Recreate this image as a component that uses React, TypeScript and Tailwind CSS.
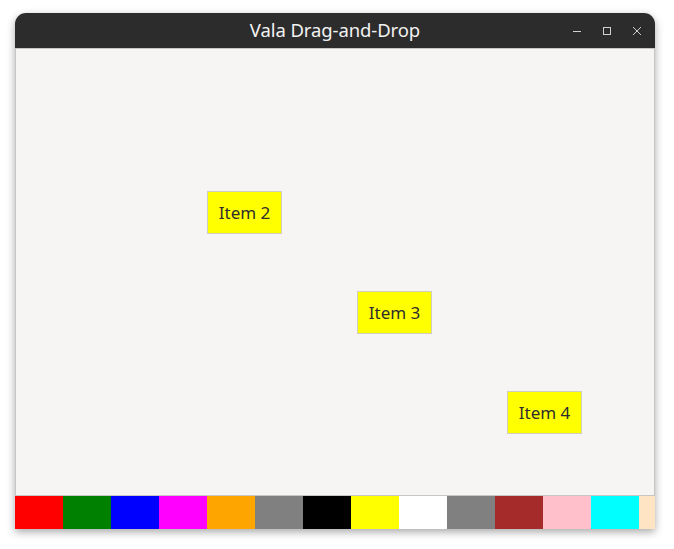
import React from "react";

const swatches = [
  "#ff0000", "#008000", "#0000ff", "#ff00ff", "#ffa500", "#808080", "#000000",
  "#ffff00", "#ffffff", "#808080", "#a52a2a", "#ffc0cb", "#00ffff", "#ffe4c4",
];

const items = [
  { label: "Item 2", left: 192, top: 143 },
  { label: "Item 3", left: 342, top: 243 },
  { label: "Item 4", left: 492, top: 343 },
];

export default function App() {
  return (
    <div className="w-[674px] h-[549px] bg-white relative" style={{ fontFamily: "'Noto Sans', 'Open Sans', sans-serif" }}>
      <div className="absolute left-[15px] top-[13px] w-[640px] h-[516px] rounded-t-[11px] overflow-hidden flex flex-col shadow-[0_3px_9px_rgba(0,0,0,0.35)]">
        {/* Title bar */}
        <div className="h-[35px] bg-[#2c2c2c] relative flex items-center justify-center shrink-0">
          <span className="text-[#f2f2f2] text-[18.5px] leading-none tracking-[-0.1px]">Vala Drag-and-Drop</span>
          <div className="absolute right-[12px] top-0 h-full flex items-center gap-[18px] text-[#d0d0d0]">
            <svg width="12" height="12" viewBox="0 0 12 12"><path d="M2 6.5h8" stroke="currentColor" strokeWidth="1" /></svg>
            <svg width="12" height="12" viewBox="0 0 12 12"><rect x="2.5" y="2.5" width="7" height="7" fill="none" stroke="currentColor" strokeWidth="1" /></svg>
            <svg width="12" height="12" viewBox="0 0 12 12"><path d="M2 2l8 8M10 2l-8 8" stroke="currentColor" strokeWidth="1" /></svg>
          </div>
        </div>

        {/* Canvas */}
        <div className="h-[448px] bg-[#f6f5f4] border border-[#c8c5c2] relative shrink-0">
          {items.map(it => (
            <div
              key={it.label}
              className="absolute w-[75px] h-[43px] bg-[#ffff00] border border-[#cfcfc0] flex items-center justify-center text-[#2e2e2e] text-[17px]"
              style={{ left: it.left - 1, top: it.top - 1 }}
            >
              {it.label}
            </div>
          ))}
        </div>

        {/* Color strip */}
        <div className="h-[33px] flex shrink-0">
          {swatches.map((c, i) => (
            <div key={i} className="w-[48px] h-full shrink-0" style={{ backgroundColor: c }} />
          ))}
        </div>
      </div>
    </div>
  );
}
